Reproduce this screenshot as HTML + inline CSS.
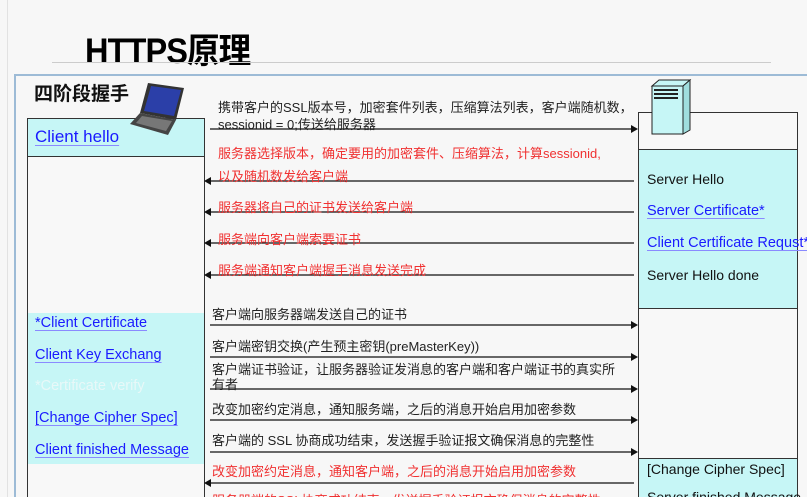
<!DOCTYPE html>
<html style="margin:0;width:807px;height:497px;overflow:hidden"><head><meta charset="utf-8"><style>
body{margin:0;width:807px;height:497px;overflow:hidden;background:#f7f7f7;font-family:"Liberation Sans","Noto Sans CJK SC",sans-serif;position:relative}
.a{position:absolute;white-space:nowrap}
.t{font-size:13px;color:#222}
.r{color:#f03030}
.l{font-size:14.5px;color:#1a1aff;text-decoration:underline;text-decoration-color:#8a8aff;text-underline-offset:3px}
.k{font-size:14px;color:#111}
</style></head><body>
<div class="a" style="left:7px;top:0;width:1px;height:497px;background:#e2e2e2"></div>
<div class="a" style="left:85px;top:23px;font-size:35px;font-weight:bold;letter-spacing:-1px;color:#000;transform:scaleX(.93);transform-origin:left">HTTPS原理</div>
<div class="a" style="left:52px;top:62px;width:719px;height:1px;background:#ccc"></div>
<div class="a" style="left:14px;top:74px;width:793px;height:2px;background:#9dbbd6"></div>
<div class="a" style="left:14px;top:74px;width:2px;height:423px;background:#9dbbd6"></div>
<div class="a" style="left:34px;top:79px;font-size:19px;font-weight:bold;color:#111">四阶段握手</div>

<div class="a" style="left:27px;top:118px;width:176px;height:385px;border:1px solid #333;background:#f8f8f8"></div>
<div class="a" style="left:28px;top:119px;width:176px;height:37px;background:#c6f6f6;border-bottom:1px solid #333"></div>
<div class="a l" style="left:35px;top:127px;font-size:17px">Client hello</div>
<div class="a" style="left:28px;top:313px;width:176px;height:151px;background:#c6f6f6"></div>
<div class="a l" style="left:35px;top:315px">*Client Certificate</div>
<div class="a l" style="left:35px;top:347px">Client Key Exchang</div>
<div class="a" style="left:35px;top:378px;font-size:14.5px;color:#e8f8f8">*Certificate verify</div>
<div class="a l" style="left:35px;top:410px">[Change Cipher Spec]</div>
<div class="a l" style="left:35px;top:442px">Client finished Message</div>

<svg class="a" style="left:128px;top:80px" width="60" height="58" viewBox="0 0 60 58">
<polygon points="20,3 56,8 48,40 12,33" fill="#333"/>
<polygon points="23,6 53,10 46,36 16,31" fill="#2b3fa8"/>
<polygon points="12,33 48,40 40,55 2,44" fill="#444"/>
<polygon points="14,36 44,41 38,51 8,43" fill="#777"/>
</svg>

<div class="a" style="left:638px;top:112px;width:158px;height:400px;border:1px solid #333;background:#f8f8f8"></div>
<div class="a" style="left:639px;top:149px;width:158px;height:158px;background:#c6f6f6;border-top:1px solid #333;border-bottom:1px solid #333"></div>
<div class="a" style="left:639px;top:458px;width:158px;height:40px;background:#c6f6f6;border-top:1px solid #333"></div>
<svg class="a" style="left:650px;top:79px" width="42" height="58" viewBox="0 0 42 58">
<polygon points="2,7 9,1 40,1 33,7" fill="#c6f6f6" stroke="#222"/>
<polygon points="33,7 40,1 40,51 33,55" fill="#9fdede" stroke="#222"/>
<rect x="2" y="7" width="31" height="48" fill="#c6f6f6" stroke="#222"/>
<rect x="4" y="10" width="24" height="2" fill="#222"/><rect x="4" y="14" width="24" height="2" fill="#222"/><rect x="4" y="18" width="24" height="2" fill="#222"/>
</svg>
<div class="a k" style="left:647px;top:171px">Server Hello</div>
<div class="a l" style="left:647px;top:203px">Server Certificate*</div>
<div class="a l" style="left:647px;top:235px">Client Certificate Requst*</div>
<div class="a k" style="left:647px;top:267px">Server Hello done</div>
<div class="a k" style="left:647px;top:461px">[Change Cipher Spec]</div>
<div class="a k" style="left:647px;top:489px">Server finished Message</div>

<svg class="a" style="left:0;top:0" width="807" height="497">
<g stroke="#111" stroke-width="1.3">
<line x1="210" y1="129" x2="632" y2="129"/>
<line x1="210" y1="181" x2="634" y2="181"/>
<line x1="210" y1="212" x2="634" y2="212"/>
<line x1="210" y1="243" x2="634" y2="243"/>
<line x1="210" y1="275" x2="634" y2="275"/>
<line x1="210" y1="325" x2="632" y2="325"/>
<line x1="210" y1="357" x2="632" y2="357"/>
<line x1="210" y1="389" x2="632" y2="389"/>
<line x1="210" y1="420" x2="632" y2="420"/>
<line x1="210" y1="452" x2="632" y2="452"/>
<line x1="210" y1="483" x2="634" y2="483"/>
</g>
<g fill="#111">
<polygon points="638,129 631,125 631,133"/>
<polygon points="638,325 631,321 631,329"/><polygon points="638,357 631,353 631,361"/>
<polygon points="638,389 631,385 631,393"/><polygon points="638,420 631,416 631,424"/>
<polygon points="638,452 631,448 631,456"/>
<polygon points="204,181 211,177 211,185"/><polygon points="204,212 211,208 211,216"/>
<polygon points="204,243 211,239 211,247"/><polygon points="204,275 211,271 211,279"/>
<polygon points="204,483 211,479 211,487"/>
</g></svg>

<div class="a t" style="left:218px;top:97px">携带客户的SSL版本号，加密套件列表，压缩算法列表，客户端随机数，</div>
<div class="a t" style="left:218px;top:114px">sessionid = 0;传送给服务器</div>
<div class="a t r" style="left:218px;top:143px">服务器选择版本，确定要用的加密套件、压缩算法，计算sessionid,</div>
<div class="a t r" style="left:218px;top:166px">以及随机数发给客户端</div>
<div class="a t r" style="left:218px;top:197px">服务器将自己的证书发送给客户端</div>
<div class="a t r" style="left:218px;top:229px">服务端向客户端索要证书</div>
<div class="a t r" style="left:218px;top:260px">服务端通知客户端握手消息发送完成</div>
<div class="a t" style="left:212px;top:304px">客户端向服务器端发送自己的证书</div>
<div class="a t" style="left:212px;top:336px">客户端密钥交换(产生预主密钥(preMasterKey))</div>
<div class="a t" style="left:212px;top:359px">客户端证书验证，让服务器验证发消息的客户端和客户端证书的真实所</div>
<div class="a t" style="left:212px;top:374px">有者</div>
<div class="a t" style="left:212px;top:399px">改变加密约定消息，通知服务端，之后的消息开始启用加密参数</div>
<div class="a t" style="left:212px;top:430px">客户端的 SSL 协商成功结束，发送握手验证报文确保消息的完整性</div>
<div class="a t r" style="left:212px;top:461px">改变加密约定消息，通知客户端，之后的消息开始启用加密参数</div>
<div class="a t r" style="left:212px;top:490px">服务器端的SSL协商成功结束，发送握手验证报文确保消息的完整性</div>
</body></html>
